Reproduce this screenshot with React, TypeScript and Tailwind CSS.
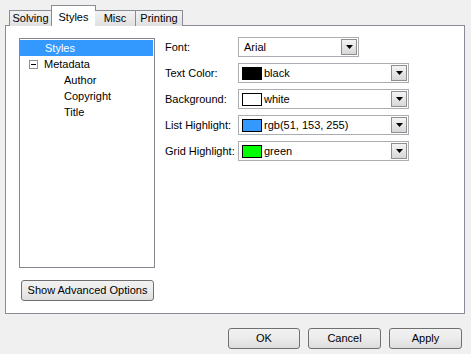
import React from "react";

const font = { fontFamily: '"Liberation Sans", Arial, sans-serif' };

function Arrow() {
  return (
    <div className="w-[16px] h-[16px] border border-[#8e8f8f] bg-gradient-to-b from-[#f4f4f4] to-[#d8d8d8] flex items-center justify-center shrink-0">
      <svg width="7" height="4" viewBox="0 0 7 4">
        <polygon points="0,0 7,0 3.5,4" fill="#000" />
      </svg>
    </div>
  );
}

function Combo({ w, swatch, text }: { w: string; swatch?: string; text: string }) {
  return (
    <div className={`${w} h-[20px] border border-[#abadb3] bg-white flex items-center pl-[3px] pr-[1px]`}>
      {swatch ? (
        <div className="w-[20px] h-[13px] border border-black mr-[2px] shrink-0" style={{ background: swatch }} />
      ) : (
        <div className="w-[2px]" />
      )}
      <span className="flex-1 text-[11px] text-black leading-none">{text}</span>
      <Arrow />
    </div>
  );
}

function Btn({ w, children }: { w: string; children: React.ReactNode }) {
  return (
    <div className={`${w} h-[21px] rounded-[3px] border border-[#707070] bg-gradient-to-b from-[#f2f2f2] via-[#ebebeb] to-[#dddddd] flex items-center justify-center text-[11px] text-black`}>
      {children}
    </div>
  );
}

export default function App() {
  const rows: { label: string; w: string; swatch?: string; text: string }[] = [
    { label: "Font:", w: "w-[121px]", text: "Arial" },
    { label: "Text Color:", w: "w-[171px]", swatch: "#000000", text: "black" },
    { label: "Background:", w: "w-[171px]", swatch: "#ffffff", text: "white" },
    { label: "List Highlight:", w: "w-[171px]", swatch: "#3399ff", text: "rgb(51, 153, 255)" },
    { label: "Grid Highlight:", w: "w-[171px]", swatch: "#00ff00", text: "green" },
  ];
  return (
    <div className="w-[471px] h-[354px] bg-[#f0f0f0] overflow-hidden text-[11px] text-black" style={font}>
      <div className="pl-[9px] pt-[5px] flex items-end h-[26px] relative z-10">
        <div className="w-[43px] h-[16px] border border-[#898c95] border-b-0 bg-gradient-to-b from-[#f2f2f2] to-[#e0e0e0] flex items-center justify-center">Solving</div>
        <div className="w-[45px] h-[21px] border border-[#898c95] border-b-0 bg-white flex items-start justify-center pt-[3px] -mx-[1px]">Styles</div>
        <div className="w-[41px] h-[16px] border border-[#898c95] border-b-0 border-l-0 bg-gradient-to-b from-[#f2f2f2] to-[#e0e0e0] flex items-center justify-center">Misc</div>
        <div className="w-[47px] h-[16px] border border-[#898c95] border-b-0 border-l-0 bg-gradient-to-b from-[#f2f2f2] to-[#e0e0e0] flex items-center justify-center">Printing</div>
      </div>
      <div className="ml-[5px] -mt-[1px] w-[460px] h-[289px] border border-[#898c95] bg-white flex pl-[13px] pt-[12px]">
        <div className="flex flex-col w-[136px]">
          <div className="h-[230px] border border-[#828790] pt-[1px] pr-[1px]">
            <div className="h-[16px] bg-[#3399ff] text-white flex items-center pl-[25px]">Styles</div>
            <div className="h-[16px] flex items-center pl-[9px]">
              <div className="w-[9px] h-[9px] border border-[#919191] bg-white flex items-center justify-center mr-[6px]">
                <div className="w-[5px] h-[1px] bg-black" />
              </div>
              Metadata
            </div>
            <div className="h-[16px] flex items-center pl-[44px]">Author</div>
            <div className="h-[16px] flex items-center pl-[44px]">Copyright</div>
            <div className="h-[16px] flex items-center pl-[44px]">Title</div>
          </div>
          <div className="mt-[12px] ml-[2px]">
            <Btn w="w-[133px]">Show Advanced Options</Btn>
          </div>
        </div>
        <div className="ml-[10px] -mt-[1px] flex flex-col gap-[6px]">
          {rows.map((r) => (
            <div key={r.label} className="flex items-center h-[20px]">
              <div className="w-[73px]">{r.label}</div>
              <Combo w={r.w} swatch={r.swatch} text={r.text} />
            </div>
          ))}
        </div>
      </div>
      <div className="flex justify-end gap-[8px] pr-[9px] mt-[14px]">
        <Btn w="w-[72px]">OK</Btn>
        <Btn w="w-[73px]">Cancel</Btn>
        <Btn w="w-[73px]">Apply</Btn>
      </div>
    </div>
  );
}
